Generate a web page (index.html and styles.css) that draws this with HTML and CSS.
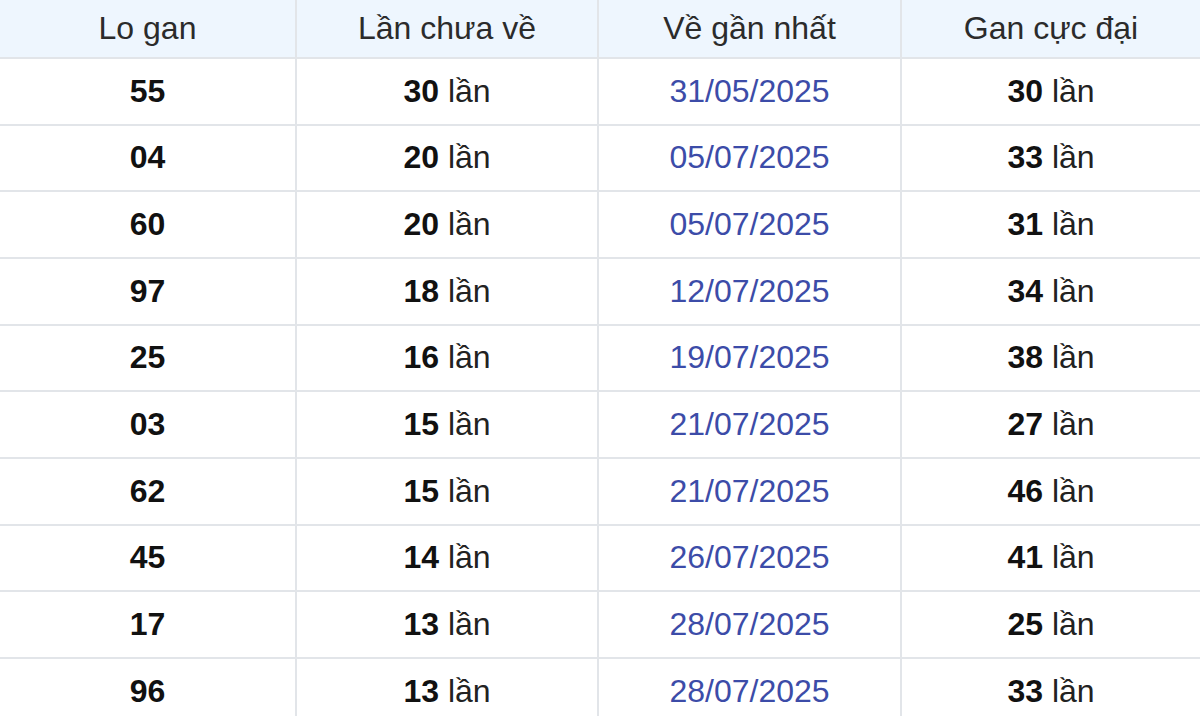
FILE: index.html
```html
<!DOCTYPE html>
<html lang="vi">
<head>
<meta charset="utf-8">
<title>Lo gan</title>
<link rel="stylesheet" href="styles.css">
</head>
<body>
<div class="frame">
<table class="gan">
<colgroup><col class="c1"><col class="c2"><col class="c3"><col class="c4"></colgroup>
<thead>
<tr><th>Lo gan</th><th>Lần chưa về</th><th>Về gần nhất</th><th>Gan cực đại</th></tr>
</thead>
<tbody>
<tr><td><b>55</b></td><td><b>30</b> lần</td><td class="date">31/05/2025</td><td><b>30</b> lần</td></tr>
<tr><td><b>04</b></td><td><b>20</b> lần</td><td class="date">05/07/2025</td><td><b>33</b> lần</td></tr>
<tr><td><b>60</b></td><td><b>20</b> lần</td><td class="date">05/07/2025</td><td><b>31</b> lần</td></tr>
<tr><td><b>97</b></td><td><b>18</b> lần</td><td class="date">12/07/2025</td><td><b>34</b> lần</td></tr>
<tr><td><b>25</b></td><td><b>16</b> lần</td><td class="date">19/07/2025</td><td><b>38</b> lần</td></tr>
<tr><td><b>03</b></td><td><b>15</b> lần</td><td class="date">21/07/2025</td><td><b>27</b> lần</td></tr>
<tr><td><b>62</b></td><td><b>15</b> lần</td><td class="date">21/07/2025</td><td><b>46</b> lần</td></tr>
<tr><td><b>45</b></td><td><b>14</b> lần</td><td class="date">26/07/2025</td><td><b>41</b> lần</td></tr>
<tr><td><b>17</b></td><td><b>13</b> lần</td><td class="date">28/07/2025</td><td><b>25</b> lần</td></tr>
<tr><td><b>96</b></td><td><b>13</b> lần</td><td class="date">28/07/2025</td><td><b>33</b> lần</td></tr>
</tbody>
</table>
</div>
</body>
</html>
```
FILE: styles.css
```css
html, body {
  margin: 0;
  padding: 0;
  background: #ffffff;
}
.frame {
  width: 1200px;
  height: 716px;
  overflow: hidden;
}
.gan {
  width: 1200px;
  border-collapse: collapse;
  table-layout: fixed;
  font-family: "Liberation Sans", Arial, sans-serif;
  font-size: 32px;
  color: #222222;
}
.c1 { width: 296px; }
.c2 { width: 302px; }
.c3 { width: 303px; }
.c4 { width: 299px; }
.gan th, .gan td {
  text-align: center;
  vertical-align: middle;
  padding: 0;
  border-left: 2px solid #e2e5e9;
  border-bottom: 2px solid #e2e5e9;
}
.gan th:first-child, .gan td:first-child {
  border-left: none;
}
.gan th {
  height: 57px;
  background: #eef6fe;
  font-weight: normal;
  color: #2b2b2b;
}
.gan td {
  height: 64.67px;
}
.gan b {
  font-weight: bold;
  color: #111111;
}
.gan .date {
  color: #3c4ca8;
}
```
